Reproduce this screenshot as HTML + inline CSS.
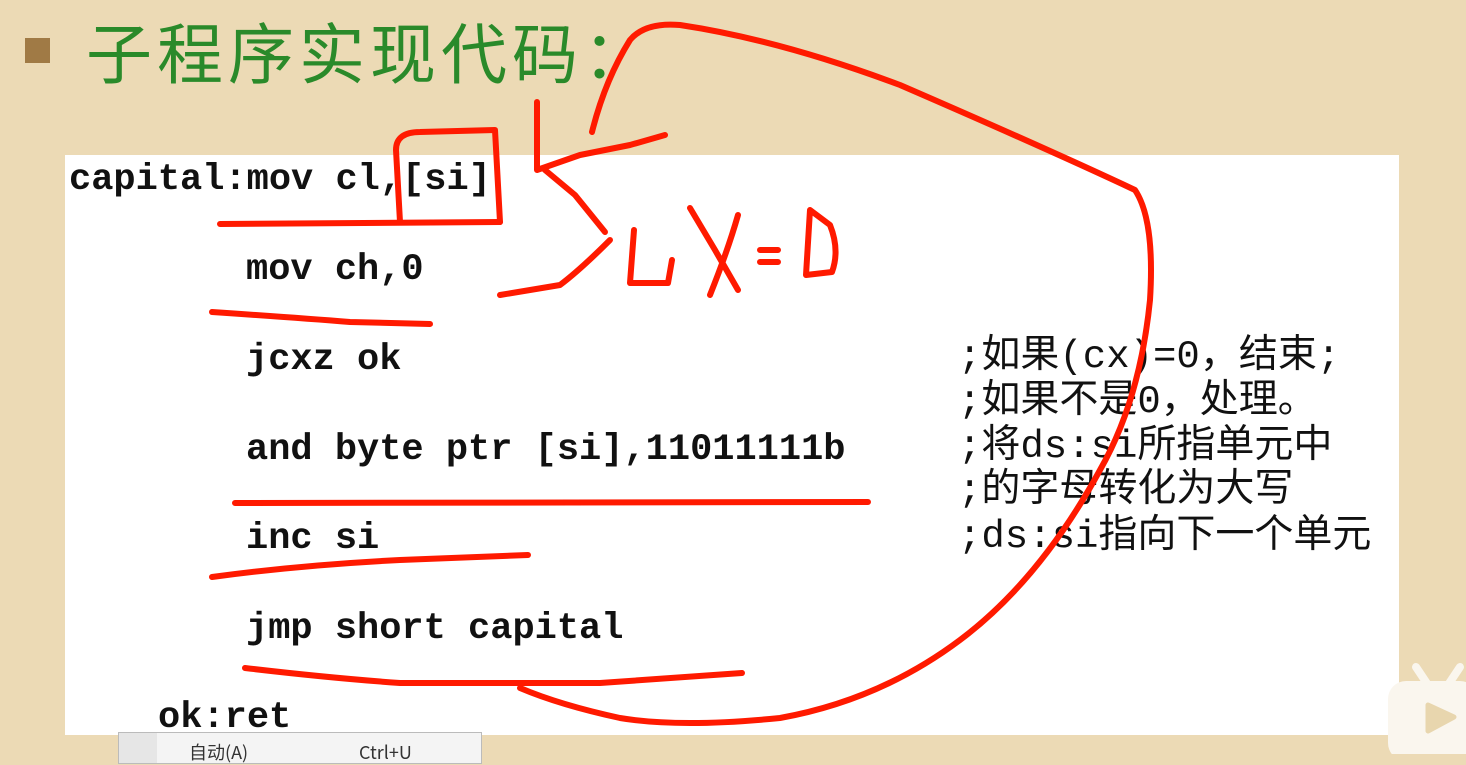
<!DOCTYPE html>
<html><head><meta charset="utf-8"><style>
body{margin:0;width:1466px;height:754px;overflow:hidden;background:#ecdab5;position:relative;font-family:"Liberation Mono",monospace}
.box{position:absolute;left:65px;top:155px;width:1334px;height:580px;background:#fff}
.code{position:absolute;font-family:"Liberation Mono","DejaVu Sans Mono",monospace;font-weight:bold;font-size:37px;color:#111;white-space:pre;line-height:1}
.cm{position:absolute;left:958px;font-family:"Liberation Mono","Noto Sans CJK SC",monospace;font-size:39px;color:#111;white-space:pre;line-height:1}
.title{position:absolute;left:86px;top:2px;font-family:"Noto Sans CJK SC",sans-serif;font-size:66px;color:#2a8a2a;font-weight:400;letter-spacing:5px}
</style></head><body>
<div style="position:absolute;left:25px;top:38px;width:25px;height:25px;background:#a07a45"></div>
<div class="title">子程序实现代码：</div>
<div class="box"></div>
<div class="code" style="left:69px;top:162px">capital:mov cl,[si]</div>
<div class="code" style="left:246px;top:252px">mov ch,0</div>
<div class="code" style="left:246px;top:342px">jcxz ok</div>
<div class="code" style="left:246px;top:432px">and byte ptr [si],11011111b</div>
<div class="code" style="left:246px;top:521px">inc si</div>
<div class="code" style="left:246px;top:611px">jmp short capital</div>
<div class="code" style="left:158px;top:700px">ok:ret</div>
<div class="cm" style="top:338px">;如果(cx)=0，结束;</div>
<div class="cm" style="top:383px">;如果不是0，处理。</div>
<div class="cm" style="top:428px">;将ds:si所指单元中</div>
<div class="cm" style="top:472px">;的字母转化为大写</div>
<div class="cm" style="top:518px">;ds:si指向下一个单元</div>
<div style="position:absolute;left:118px;top:732px;width:362px;height:30px;background:#f4f4f4;border:1px solid #bbb;font-family:'Noto Sans CJK SC',sans-serif;font-size:18px;color:#333"><span style="position:absolute;left:0;top:0;width:38px;height:30px;background:#e6e6e6"></span><span style="position:absolute;left:70px;top:6px">自动(A)</span><span style="position:absolute;left:240px;top:6px">Ctrl+U</span></div>
<svg width="1466" height="754" style="position:absolute;left:0;top:0" fill="none" stroke="#ff1a00" stroke-width="6" stroke-linecap="round" stroke-linejoin="round">
<path d="M220 224 L500 222"/>
<path d="M400 222 L396 150 Q396 132 420 132 L495 130 L500 222"/>
<path d="M537 102 L537 170 L580 155 L630 145 L665 135"/>
<path d="M545 170 L575 195 L605 232"/>
<path d="M610 240 Q580 270 560 285 L500 295"/>
<path d="M212 312 Q300 318 350 322 L430 324"/>
<path d="M634 230 L630 283 L668 283 L672 260"/>
<path d="M690 208 L715 250 L738 290"/>
<path d="M738 215 Q728 250 710 295"/>
<path d="M760 250 L778 250 M760 262 L778 262"/>
<path d="M810 210 L806 275 L832 272 Q840 250 830 225 Z"/>
<path d="M235 503 L868 502"/>
<path d="M212 577 Q300 565 400 560 L528 555"/>
<path d="M245 668 Q330 678 400 683 L600 683 L742 673"/>
<path d="M592 132 Q605 80 630 40 Q645 22 680 25 Q780 40 900 85 Q1050 150 1135 190 Q1155 220 1150 300 Q1140 400 1100 470 Q1040 580 960 640 Q880 700 780 718 Q680 728 620 718 Q560 705 520 688"/>
</svg>
<div style="position:absolute;left:1388px;top:655px;width:78px;height:99px">
<svg width="80" height="99" viewBox="0 0 80 99"><path d="M28 12 L40 30 M72 12 L60 30" stroke="#faf6ee" stroke-width="8" stroke-linecap="round"/><rect x="0" y="26" width="90" height="80" rx="18" fill="#faf6ee"/><path d="M40 50 L66 62 L40 76 Z" fill="#e8d6ae" stroke="#e8d6ae" stroke-width="5" stroke-linejoin="round"/></svg>
</div>
</body></html>
